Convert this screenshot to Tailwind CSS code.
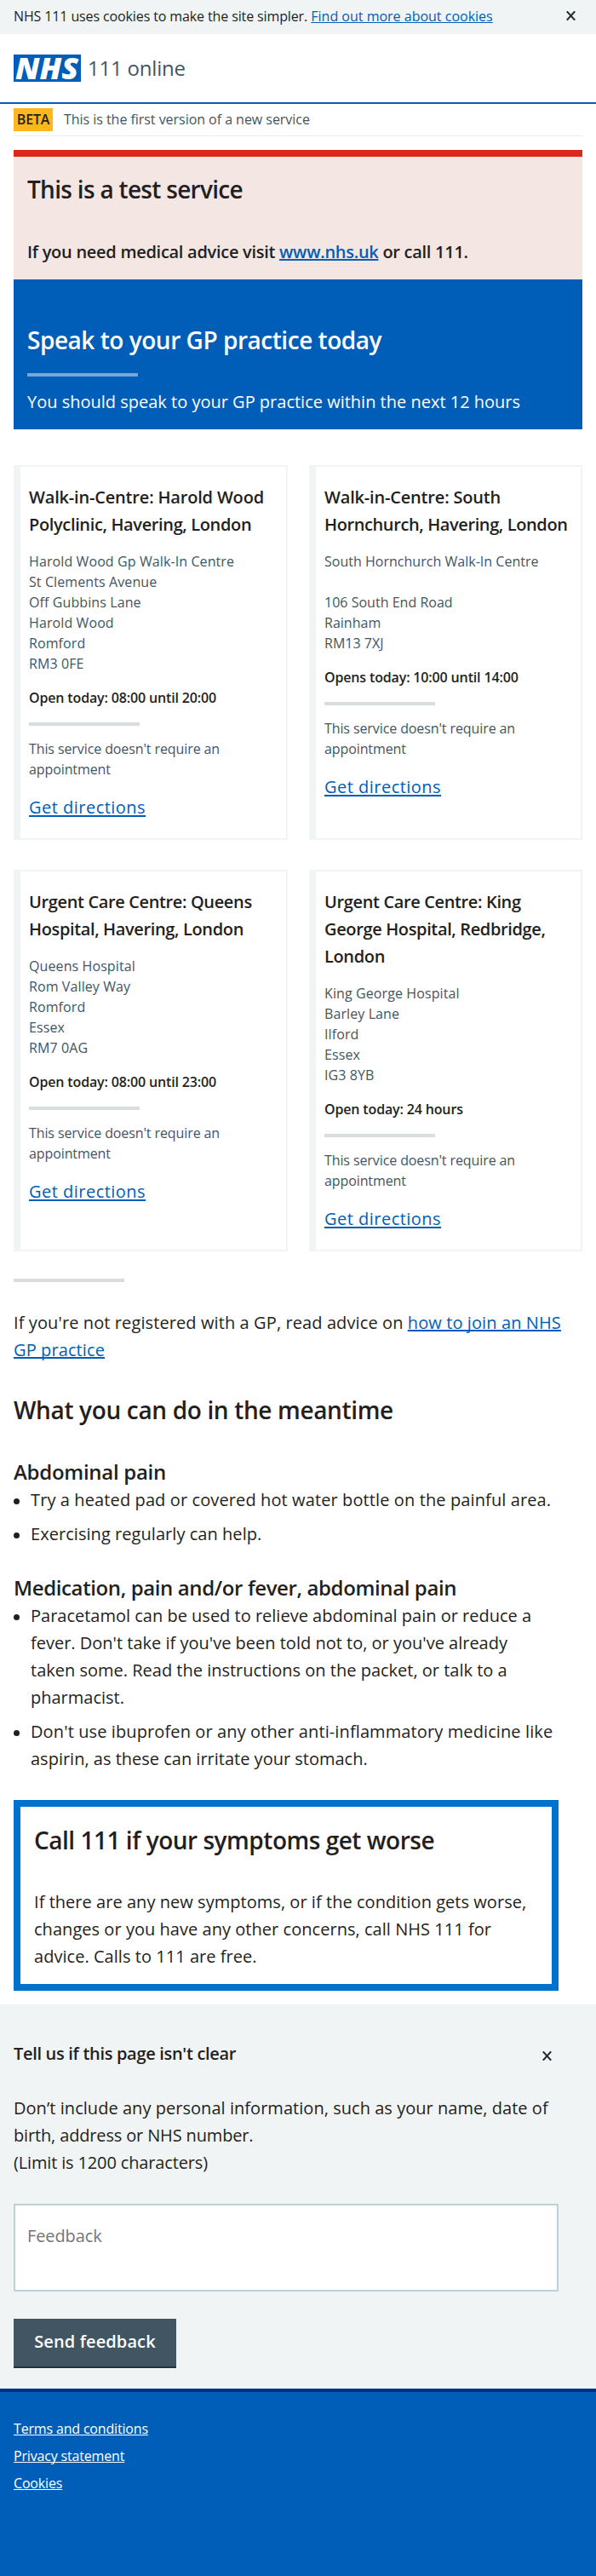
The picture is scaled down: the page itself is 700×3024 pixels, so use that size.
<!DOCTYPE html>
<html lang="en">
<head>
<meta charset="utf-8">
<title>NHS 111 online</title>
<script src="https://cdn.jsdelivr.net/npm/@tailwindcss/browser@4"></script>
</head>
<body class="bg-white font-['Open_Sans',sans-serif] text-[20px] leading-8 text-[#231f20] whitespace-nowrap [text-decoration-skip-ink:none]">

<div class="flex h-10 items-start justify-between bg-[#f0f4f5] pl-4 pr-[24px] pt-[7px] text-base leading-6">
  <p><span class="tracking-[-0.12px]">NHS 111 uses cookies to make the site simpler.</span> <a class="text-[#005eb8] underline decoration-1 underline-offset-1">Find out more about cookies</a></p>
  <svg class="mt-[6px] h-[11px] w-[11px]" viewBox="0 0 11 11" fill="none" stroke="#212b32" stroke-width="2"><path d="M.8.3 10.2 10.7M10.2.3.8 10.7"/></svg>
</div>

<header class="flex h-[82px] items-start border-b-2 border-[#005eb8] px-4 pt-6">
  <svg class="h-8 w-[79px] overflow-visible" viewBox="0 0 79 32"><rect width="79" height="32" fill="#005eb8"/><text x="2" y="28.7" font-family="Open Sans" font-size="36" font-weight="800" font-style="italic" fill="#fff" textLength="74" lengthAdjust="spacingAndGlyphs">NHS</text></svg>
  <span class="ml-2 text-2xl leading-8 tracking-[-0.2px] text-[#425563]">111 online</span>
</header>

<main class="px-4">
  <div class="flex h-[38px] items-start border-b border-[#e8edee] pt-[5px] text-base leading-6">
    <strong class="h-[27px] w-[46px] bg-[#ffb81c] pt-px text-center font-semibold tracking-[-0.15px]">BETA</strong>
    <span class="ml-[13px] pt-px tracking-[-0.04px] text-[#425563]">This is the first version of a new service</span>
  </div>

  <section class="mt-4 border-t-8 border-[#da291c] bg-[#f4e6e3] px-4 pt-[19px] pb-4">
    <h2 class="text-[28px] font-semibold leading-[38px] tracking-[-0.7px]">This is a test service</h2>
    <p class="mt-[39px] font-semibold tracking-[-0.28px]">If you need medical advice visit <a class="text-[#005eb8] underline decoration-2 underline-offset-1">www.nhs.uk</a> or call 111.</p>
  </section>

  <section class="bg-[#005eb8] px-4 pt-[52px] pb-4 text-white">
    <h1 class="text-[28px] font-semibold leading-[38px] tracking-[-0.47px]">Speak to your GP practice today</h1>
    <div class="mt-5 h-1 w-[130px] bg-[#73a7da]"></div>
    <p class="mt-[14px]">You should speak to your GP practice within the next 12 hours</p>
  </section>

  <div class="mt-[42px] grid grid-cols-[322px_321px] gap-x-[25px] gap-y-[35px] text-base leading-6 text-[#425563]">
    <article class="h-[440px] border-2 border-l-8 border-[#f0f4f5] pl-[10px] pt-5">
      <h3 class="text-[20px] font-semibold leading-8 tracking-[-0.36px] text-[#231f20]"><span class="tracking-[-0.18px]">Walk-in-Centre: Harold Wood</span><br>Polyclinic, Havering, London</h3>
      <p class="mt-[15px] tracking-[0.1px]">Harold Wood Gp Walk-In Centre<br>St Clements Avenue<br>Off Gubbins Lane<br>Harold Wood<br>Romford<br>RM3 0FE</p>
      <p class="mt-4 font-semibold tracking-[-0.15px] text-[#231f20]">Open today: 08:00 until 20:00</p>
      <div class="mt-[17px] h-1 w-[130px] bg-[#d8dde0]"></div>
      <p class="mt-[15px] tracking-[-0.1px]">This service doesn't require an<br>appointment</p>
      <a class="mt-[17px] block w-fit text-[20px] leading-8 tracking-[0.48px] text-[#005eb8] underline decoration-2 underline-offset-2">Get directions</a>
    </article>
    <article class="h-[440px] border-2 border-l-8 border-[#f0f4f5] pl-[10px] pt-5">
      <h3 class="text-[20px] font-semibold leading-8 tracking-[-0.39px] text-[#231f20]"><span class="tracking-[-0.18px]">Walk-in-Centre: South</span><br>Hornchurch, Havering, London</h3>
      <p class="mt-[15px] tracking-[0.02px]">South Hornchurch Walk-In Centre<br><br>106 South End Road<br>Rainham<br>RM13 7XJ</p>
      <p class="mt-4 font-semibold tracking-[-0.15px] text-[#231f20]">Opens today: 10:00 until 14:00</p>
      <div class="mt-[17px] h-1 w-[130px] bg-[#d8dde0]"></div>
      <p class="mt-[15px] tracking-[-0.1px]">This service doesn't require an<br>appointment</p>
      <a class="mt-[17px] block w-fit text-[20px] leading-8 tracking-[0.48px] text-[#005eb8] underline decoration-2 underline-offset-2">Get directions</a>
    </article>
    <article class="h-[448px] border-2 border-l-8 border-[#f0f4f5] pl-[10px] pt-5">
      <h3 class="text-[20px] font-semibold leading-8 tracking-[-0.36px] text-[#231f20]">Urgent Care Centre: Queens<br>Hospital, Havering, London</h3>
      <p class="mt-[15px] tracking-[0.1px]">Queens Hospital<br>Rom Valley Way<br>Romford<br>Essex<br>RM7 0AG</p>
      <p class="mt-4 font-semibold tracking-[-0.15px] text-[#231f20]">Open today: 08:00 until 23:00</p>
      <div class="mt-[17px] h-1 w-[130px] bg-[#d8dde0]"></div>
      <p class="mt-[15px] tracking-[-0.1px]">This service doesn't require an<br>appointment</p>
      <a class="mt-[17px] block w-fit text-[20px] leading-8 tracking-[0.48px] text-[#005eb8] underline decoration-2 underline-offset-2">Get directions</a>
    </article>
    <article class="h-[448px] border-2 border-l-8 border-[#f0f4f5] pl-[10px] pt-5">
      <h3 class="text-[20px] font-semibold leading-8 tracking-[-0.36px] text-[#231f20]">Urgent Care Centre: King<br>George Hospital, Redbridge,<br>London</h3>
      <p class="mt-[15px] tracking-[0.1px]">King George Hospital<br>Barley Lane<br>Ilford<br>Essex<br>IG3 8YB</p>
      <p class="mt-4 font-semibold tracking-[-0.15px] text-[#231f20]">Open today: 24 hours</p>
      <div class="mt-[17px] h-1 w-[130px] bg-[#d8dde0]"></div>
      <p class="mt-[15px] tracking-[-0.1px]">This service doesn't require an<br>appointment</p>
      <a class="mt-[17px] block w-fit text-[20px] leading-8 tracking-[0.48px] text-[#005eb8] underline decoration-2 underline-offset-2">Get directions</a>
    </article>
  </div>

  <div class="mt-8 h-1 w-[130px] bg-[#d8dde0]"></div>

  <p class="mt-8 tracking-[0.1px]">If you're not registered with a GP, read advice on <a class="text-[#005eb8] underline decoration-2 underline-offset-1">how to join an NHS<br>GP practice</a></p>

  <h2 class="mt-[35px] text-[28px] font-semibold leading-[38px] tracking-[-0.35px]">What you can do in the meantime</h2>

  <h3 class="mt-[38px] text-2xl font-semibold leading-8 tracking-[-0.28px]">Abdominal pain</h3>
  <ul class="mt-px space-y-2">
    <li class="flex"><span class="mt-[14px] mr-[13px] h-[7px] w-[7px] rounded-full bg-[#231f20]"></span><span class="tracking-[0.11px]">Try a heated pad or covered hot water bottle on the painful area.</span></li>
    <li class="flex"><span class="mt-[14px] mr-[13px] h-[7px] w-[7px] rounded-full bg-[#231f20]"></span><span class="tracking-[0.05px]">Exercising regularly can help.</span></li>
  </ul>

  <h3 class="mt-[31px] text-2xl font-semibold leading-8 tracking-[-0.38px]">Medication, pain and/or fever, abdominal pain</h3>
  <ul class="mt-px space-y-2">
    <li class="flex"><span class="mt-[14px] mr-[13px] h-[7px] w-[7px] rounded-full bg-[#231f20]"></span><span>Paracetamol can be used to relieve abdominal pain or reduce a<br>fever. Don't take if you've been told not to, or you've already<br>taken some. Read the instructions on the packet, or talk to a<br>pharmacist.</span></li>
    <li class="flex"><span class="mt-[14px] mr-[13px] h-[7px] w-[7px] rounded-full bg-[#231f20]"></span><span><span class="tracking-[0.11px]">Don't use ibuprofen or any other anti-inflammatory medicine like</span><br>aspirin, as these can irritate your stomach.</span></li>
  </ul>

  <section class="mt-8 h-[224px] w-[640px] border-8 border-[#0072ce] pl-4 pt-5">
    <h2 class="text-[28px] font-semibold leading-[38px] tracking-[-0.48px]">Call 111 if your symptoms get worse</h2>
    <p class="mt-[38px] tracking-[0.04px]">If there are any new symptoms, or if the condition gets worse,<br>changes or you have any other concerns, call NHS 111 for<br>advice. Calls to 111 are free.</p>
  </section>
</main>

<section class="mt-4 h-[451px] bg-[#f0f4f5] px-4 pt-[42px]">
  <div class="flex w-[640px] items-start justify-between pr-2">
    <h2 class="font-semibold tracking-[-0.31px]">Tell us if this page isn't clear</h2>
    <svg class="mt-[13px] h-[11px] w-[11px]" viewBox="0 0 11 11" fill="none" stroke="#212b32" stroke-width="2"><path d="M.8.3 10.2 10.7M10.2.3.8 10.7"/></svg>
  </div>
  <p class="mt-8"><span class="tracking-[0.04px]">Don’t include any personal information, such as your name, date of</span><br><span class="tracking-[-0.15px]">birth, address or NHS number.<br>(Limit is 1200 characters)</span></p>
  <div class="mt-8 h-[103px] w-[640px] border-2 border-[#bdd1d6] bg-white pl-[14px] pt-5 tracking-[-0.1px] text-[#757575]">Feedback</div>
  <button class="mt-8 block h-[58px] w-[191px] border-b-2 border-[#263238] bg-[#425563] pb-0.5 font-semibold text-white tracking-[0.11px]">Send feedback</button>
</section>

<footer class="h-[220px] border-t-4 border-[#003087] bg-[#005eb8] px-4 pt-[31px] text-base leading-6 tracking-[-0.17px] text-white">
  <ul class="space-y-2 underline decoration-1 underline-offset-1">
    <li><a>Terms and conditions</a></li>
    <li><a>Privacy statement</a></li>
    <li><a>Cookies</a></li>
  </ul>
</footer>
</body>
</html>
